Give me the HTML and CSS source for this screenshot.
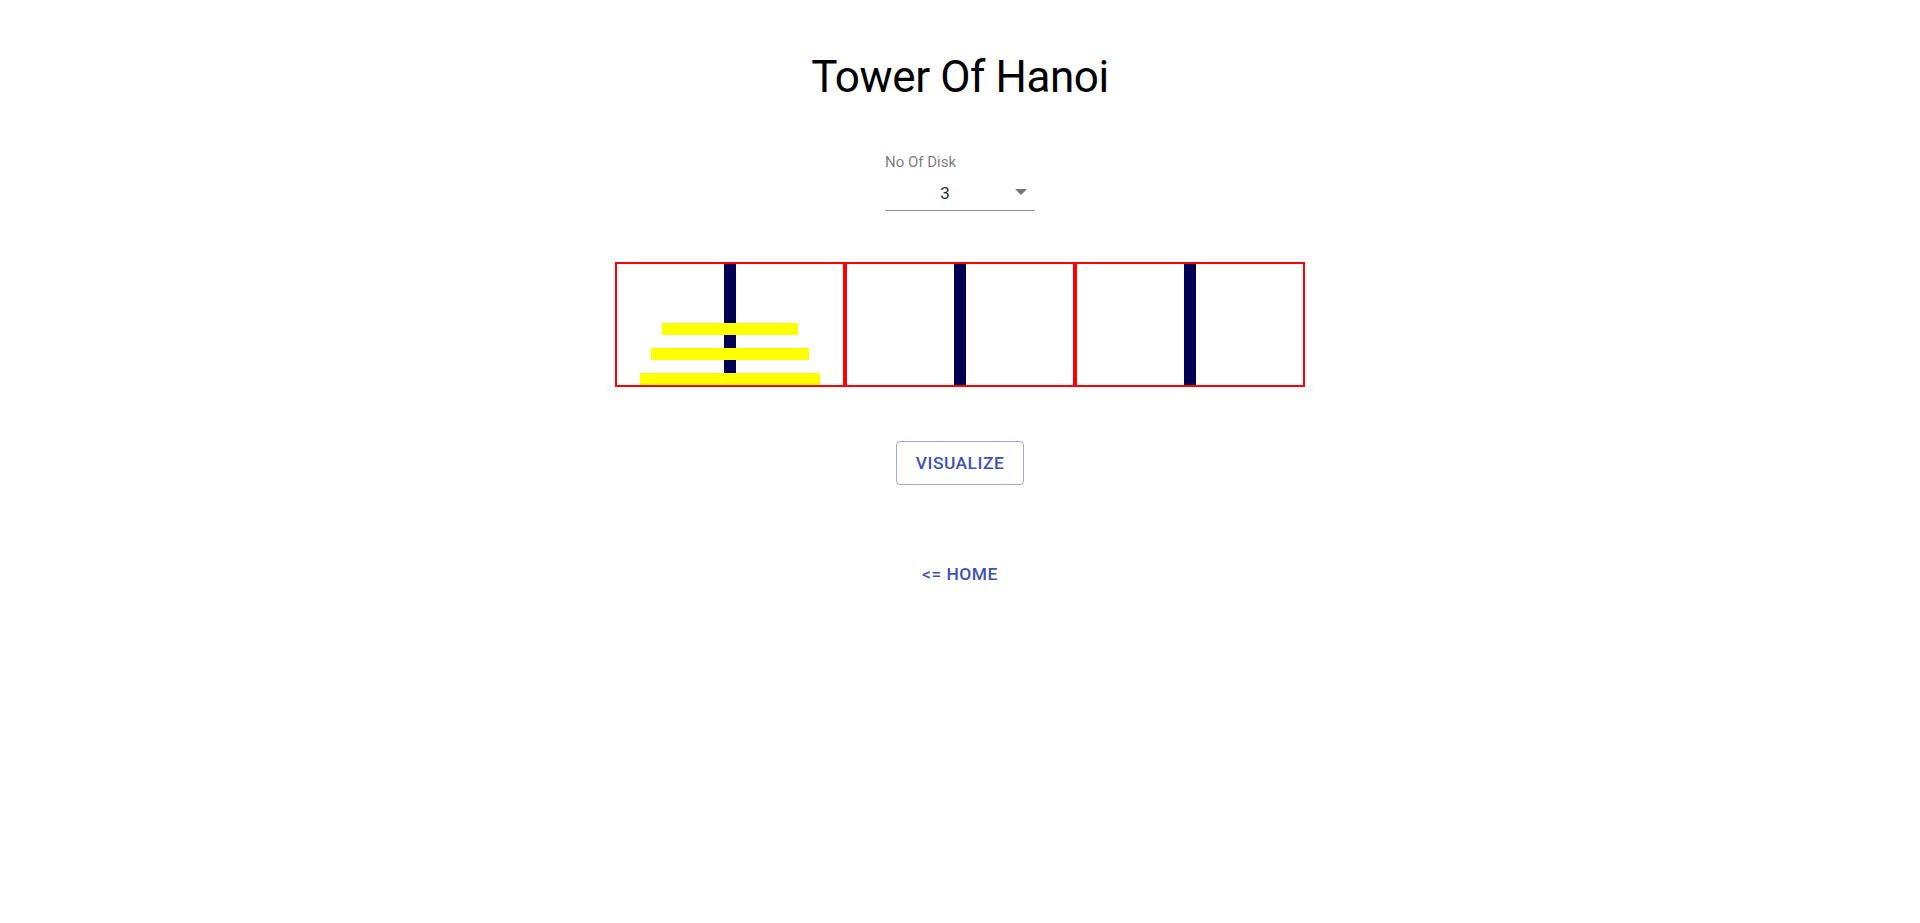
FILE: index.html
```html
<!DOCTYPE html>
<html lang="en">
<head>
<meta charset="utf-8">
<title>Tower Of Hanoi</title>
<link rel="stylesheet" href="styles.css">
</head>
<body>
<main class="page">
  <h1 class="title">Tower Of Hanoi</h1>

  <div class="field">
    <label class="field-label" for="disks">No Of Disk</label>
    <div class="select">
      <div class="select-value" id="disks">3</div>
      <svg class="select-icon" width="12" height="6" viewBox="0 0 12 6" aria-hidden="true"><path d="M0 0h12L6 6z" fill="currentColor"/></svg>
    </div>
  </div>

  <div class="board">
    <div class="tower">
      <div class="pole"></div>
      <div class="stack">
        <div class="disk" style="width:60%"></div>
        <div class="disk" style="width:70%"></div>
        <div class="disk" style="width:80%"></div>
      </div>
    </div>
    <div class="tower">
      <div class="pole"></div>
      <div class="stack"></div>
    </div>
    <div class="tower">
      <div class="pole"></div>
      <div class="stack"></div>
    </div>
  </div>

  <button class="btn-outlined" type="button">Visualize</button>

  <a class="btn-text" href="#">&lt;= Home</a>
</main>
</body>
</html>
```

FILE: styles.css
```css
html, body {
  margin: 0;
  padding: 0;
  background: #fff;
}

body {
  font-family: Roboto, "Liberation Sans", Arial, sans-serif;
  color: rgba(0, 0, 0, 0.87);
}

.page {
  display: flex;
  flex-direction: column;
  align-items: center;
  padding-top: 50px;
}

.title {
  margin: 0;
  font-size: 44px;
  font-weight: 400;
  line-height: 54px;
  letter-spacing: -0.4px;
  color: #000;
}

.field {
  margin-top: 51px;
  width: 150px;
  display: flex;
  flex-direction: column;
}

.field-label {
  font-size: 15px;
  line-height: 15px;
  color: rgba(0, 0, 0, 0.54);
  margin-bottom: 8px;
}

.select {
  position: relative;
  border-bottom: 1px solid rgba(0, 0, 0, 0.42);
}

.select-value {
  padding: 6px 30px 7px 0;
  font-size: 17px;
  line-height: 19px;
  text-align: center;
  color: rgba(0, 0, 0, 0.87);
}

.select-icon {
  position: absolute;
  right: 8px;
  top: 11px;
  color: rgba(0, 0, 0, 0.54);
}

.board {
  margin-top: 51px;
  display: flex;
}

.tower {
  width: 226px;
  height: 121px;
  border: 2px solid #ff0000;
  display: grid;
}

.pole {
  grid-area: 1 / 1;
  justify-self: center;
  width: 12px;
  height: 100%;
  background: #020052;
}

.stack {
  grid-area: 1 / 1;
  display: flex;
  flex-direction: column;
  justify-content: flex-end;
  align-items: center;
  gap: 13px;
}

.disk {
  height: 12px;
  background: #ffff00;
}

.btn-outlined {
  margin-top: 54px;
  width: 128px;
  height: 44px;
  padding: 0;
  border: 1px solid rgba(63, 81, 181, 0.5);
  border-radius: 4px;
  background: transparent;
  color: #3f51b5;
  font-family: Roboto, "Liberation Sans", Arial, sans-serif;
  font-size: 17.4px;
  font-weight: 500;
  letter-spacing: 0.02857em;
  text-transform: uppercase;
  line-height: 28px;
}

.btn-text {
  margin-top: 69px;
  padding: 6px 8px;
  color: #3f51b5;
  font-size: 17.4px;
  font-weight: 500;
  line-height: 28px;
  letter-spacing: 0.02857em;
  text-transform: uppercase;
  text-decoration: none;
  border-radius: 4px;
}
```
